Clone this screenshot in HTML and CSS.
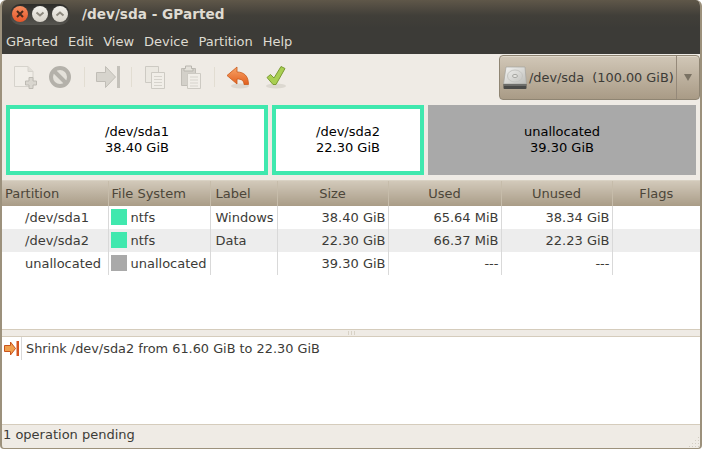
FILE: index.html
```html
<!DOCTYPE html>
<html lang="en">
    <head>
        <title>/dev/sda - GParted</title>
        <meta charset="UTF-8">
        <link rel="stylesheet" href="styles.css">
    </head>
    <body>
        <div class="window">

            <div class="titlebar">
                <div class="wm-buttons">
                    <span class="wm-button wm-close">
                        <svg width="10" height="10" viewBox="0 0 10 10"><path d="M2 2 L8 8 M8 2 L2 8" stroke="#4a2a1c" stroke-width="2"/></svg>
                    </span>
                    <span class="wm-button">
                        <svg width="10" height="10" viewBox="0 0 10 10"><path d="M1.5 3.5 L5 6.5 L8.5 3.5" fill="none" stroke="#8d897f" stroke-width="2"/></svg>
                    </span>
                    <span class="wm-button">
                        <svg width="10" height="10" viewBox="0 0 10 10"><path d="M1.5 6.5 L5 3.5 L8.5 6.5" fill="none" stroke="#8d897f" stroke-width="2"/></svg>
                    </span>
                </div>
                <div class="title">/dev/sda - GParted</div>
            </div>

            <div class="menubar">
                <span>GParted</span>
                <span>Edit</span>
                <span>View</span>
                <span>Device</span>
                <span>Partition</span>
                <span>Help</span>
            </div>

            <div class="toolbar">
                <div class="tools">
                    <svg class="tool tool-new" width="24" height="24" viewBox="0 0 24 24">
                        <path d="M1.5 1.5 H15 L20 6.5 V21.5 H1.5 Z" fill="#f1eee8" stroke="#d6d3cc"/>
                        <path d="M15 1.5 V6.5 H20" fill="#e2dfd8" stroke="#d6d3cc"/>
                        <path d="M16 12.5 H20 V16 H23.5 V20 H20 V23.5 H16 V20 H12.5 V16 H16 Z" fill="#d9d6cf" stroke="#bdbab3"/>
                    </svg>
                    <svg class="tool tool-cancel" width="24" height="24" viewBox="0 0 24 24">
                        <circle cx="12" cy="12" r="9" fill="#e4e1da" stroke="#b4b1aa" stroke-width="4"/>
                        <path d="M6 6 L18 18" stroke="#b4b1aa" stroke-width="4"/>
                    </svg>
                    <span class="sep sep-one"></span>
                    <svg class="tool tool-apply" width="25" height="24" viewBox="0 0 25 24">
                        <path d="M1.5 7.5 H10.5 V1.5 L20.5 12 L10.5 22.5 V16.5 H1.5 Z" fill="#d7d4cd" stroke="#c0bdb6"/>
                        <rect x="22" y="1" width="3" height="22" fill="#c4c1ba"/>
                    </svg>
                    <span class="sep sep-two"></span>
                    <svg class="tool tool-copy" width="22" height="24" viewBox="0 0 22 24">
                        <path d="M1.5 1.5 H14.5 V17.5 H1.5 Z" fill="#ebe8e1" stroke="#cdcac3"/>
                        <path d="M7.5 7.5 H20.5 V23.5 H7.5 Z" fill="#f1eee8" stroke="#cdcac3"/>
                        <path d="M10 11.5 H18 M10 14.5 H18 M10 17.5 H18 M10 20.5 H18" stroke="#d6d3cc"/>
                    </svg>
                    <svg class="tool tool-paste" width="22" height="24" viewBox="0 0 22 24">
                        <path d="M1.5 3.5 H15.5 V20.5 H1.5 Z" fill="#d3d0c9" stroke="#c0bdb6"/>
                        <path d="M5.5 3.5 V1 H11.5 V3.5 H13 V6 H4 V3.5 Z" fill="#e4e1da" stroke="#b9b6af"/>
                        <path d="M7.5 8.5 H20.5 V23.5 H7.5 Z" fill="#f1eee8" stroke="#cdcac3"/>
                        <path d="M10 12 H18 M10 15 H18 M10 18 H18 M10 21 H18" stroke="#d6d3cc"/>
                    </svg>
                    <span class="sep sep-three"></span>
                    <svg class="tool tool-undo" width="24" height="24" viewBox="0 0 24 24">
                        <defs>
                            <linearGradient id="undo-fill" x1="0" y1="0" x2="0" y2="1">
                                <stop offset="0" stop-color="#f8a468"/>
                                <stop offset="1" stop-color="#e2601f"/>
                            </linearGradient>
                        </defs>
                        <ellipse cx="14" cy="21" rx="9" ry="2.5" fill="#dcd8d0"/>
                        <path d="M1 10.5 L11 2 V7 C18 7 22.5 11 22.5 19.5 H18 C18 15.5 15.5 14 11 14 V19 Z" fill="url(#undo-fill)" stroke="#c95a1c" stroke-width=".8"/>
                    </svg>
                    <svg class="tool tool-check" width="22" height="24" viewBox="0 0 22 24">
                        <ellipse cx="11" cy="21" rx="10" ry="2.5" fill="#dcd8d0"/>
                        <path d="M2 12.5 L5.5 9.5 L9 13 L16 1.5 L20 3.5 L11 19.5 H8 Z" fill="#a9cf52" stroke="#7b9b32"/>
                    </svg>
                </div>

                <div class="combo">
                    <div class="combo-main">
                        <svg class="disk" width="24" height="24" viewBox="0 0 24 24">
                            <defs>
                                <linearGradient id="disk-fill" x1="0" y1="0" x2="1" y2="1">
                                    <stop offset="0" stop-color="#f4f4f2"/>
                                    <stop offset="1" stop-color="#bdbdb9"/>
                                </linearGradient>
                            </defs>
                            <path d="M3 1 H22 L23.5 18 H.5 Z" fill="url(#disk-fill)" stroke="#a5a39d" stroke-width=".7"/>
                            <ellipse cx="12" cy="10" rx="7.5" ry="6" fill="none" stroke="#c4c4c0"/>
                            <ellipse cx="12" cy="10" rx="2.5" ry="1.6" fill="#e4e4e0" stroke="#a8a8a4"/>
                            <path d="M.5 18 H23.5 V22 Q23.5 23 22.5 23 H1.5 Q.5 23 .5 22 Z" fill="#4a4a48"/>
                            <path d="M1 18.5 H23 V19.5 H1 Z" fill="#8f8f8b"/>
                        </svg>
                        <span>/dev/sda&nbsp;&nbsp;(100.00 GiB)</span>
                    </div>
                    <div class="combo-arrow"><i></i></div>
                </div>
            </div>

            <div class="diskmap">
                <div class="part part-one">/dev/sda1<br>38.40 GiB</div>
                <div class="part part-two">/dev/sda2<br>22.30 GiB</div>
                <div class="part part-free">unallocated<br>39.30 GiB</div>
            </div>

            <div class="list-area">
                <table class="table">
                    <colgroup>
                        <col class="c-partition">
                        <col class="c-fs">
                        <col class="c-label">
                        <col class="c-size">
                        <col class="c-used">
                        <col class="c-unused">
                        <col>
                    </colgroup>
                    <thead>
                        <tr>
                            <th class="left">Partition</th>
                            <th class="left">File System</th>
                            <th class="left th-label">Label</th>
                            <th>Size</th>
                            <th>Used</th>
                            <th>Unused</th>
                            <th>Flags</th>
                        </tr>
                    </thead>
                    <tbody>
                        <tr>
                            <td class="cell-name">/dev/sda1</td>
                            <td><span class="swatch swatch-ntfs"></span>ntfs</td>
                            <td class="cell-label">Windows</td>
                            <td class="num">38.40 GiB</td>
                            <td class="num">65.64 MiB</td>
                            <td class="num">38.34 GiB</td>
                            <td></td>
                        </tr>
                        <tr class="alt">
                            <td class="cell-name">/dev/sda2</td>
                            <td><span class="swatch swatch-ntfs"></span>ntfs</td>
                            <td class="cell-label">Data</td>
                            <td class="num">22.30 GiB</td>
                            <td class="num">66.37 MiB</td>
                            <td class="num">22.23 GiB</td>
                            <td></td>
                        </tr>
                        <tr>
                            <td class="cell-name">unallocated</td>
                            <td><span class="swatch swatch-free"></span>unallocated</td>
                            <td class="cell-label"></td>
                            <td class="num">39.30 GiB</td>
                            <td class="num">---</td>
                            <td class="num">---</td>
                            <td></td>
                        </tr>
                    </tbody>
                </table>
            </div>

            <div class="pane-handle"><i></i><i></i><i></i></div>

            <div class="log">
                <div class="log-icon">
                    <svg width="15" height="15" viewBox="0 0 15 15">
                        <path d="M.5 4.5 H6.5 V1 L11.5 7.5 L6.5 14 V10.5 H.5 Z" fill="#f0a04e" stroke="#c9541c"/>
                        <rect x="12.5" y="0" width="2.5" height="15" fill="#d4541f"/>
                    </svg>
                </div>
                <div class="log-text">Shrink /dev/sda2 from 61.60 GiB to 22.30 GiB</div>
            </div>

            <div class="statusbar">
                <span>1 operation pending</span>
                <svg class="grip" width="12" height="12" viewBox="0 0 12 12">
                    <path d="M10 1 h1 v1 h-1 Z M7 4 h1 v1 h-1 Z M10 4 h1 v1 h-1 Z M4 7 h1 v1 h-1 Z M7 7 h1 v1 h-1 Z M10 7 h1 v1 h-1 Z M1 10 h1 v1 h-1 Z M4 10 h1 v1 h-1 Z M7 10 h1 v1 h-1 Z M10 10 h1 v1 h-1 Z" fill="#d2cdc2"/>
                </svg>
            </div>

        </div>
    </body>
</html>
```

FILE: styles.css
```css
html, body{
    margin: 0;
    padding: 0;
    background: #fff;
}

body{
    width: 702px;
    height: 449px;
    overflow: hidden;
    font-family: "DejaVu Sans", sans-serif;
    font-size: 13px;
    color: #3c3b37;
}

.window{
    box-sizing: border-box;
    width: 702px;
    height: 449px;
    display: flex;
    flex-direction: column;
    background: #efebe5;
    border-left: 2px solid #9c917c;
    border-right: 2px solid #9c917c;
    border-bottom: 1px solid #9c917c;
    border-radius: 6px 6px 4px 4px;
    overflow: hidden;
}

/* title + menu */
.titlebar{
    margin: 0 -2px;
    height: 28px;
    flex: none;
    display: flex;
    align-items: center;
    background: linear-gradient(to bottom, #5f5749, #413f39 55%, #3c3b37);
}

.wm-buttons{
    display: flex;
    gap: 4px;
    margin-left: 10px;
    padding: 2px 2px;
    height: 17px;
    align-items: center;
    border-radius: 11px;
    background: linear-gradient(to bottom, #2d2c29, #565550);
}

.wm-button{
    width: 16px;
    height: 16px;
    display: flex;
    align-items: center;
    justify-content: center;
    border-radius: 50%;
    background: linear-gradient(to bottom, #f3f1ec, #d6d2c9);
}

.wm-close{
    background: linear-gradient(to bottom, #f58c5e, #e5562a);
}

.title{
    margin-left: 12px;
    font-size: 13.65px;
    font-weight: bold;
    color: #dfdbd2;
}

.menubar{
    margin: 0 -2px;
    height: 26px;
    flex: none;
    padding-left: 6px;
    display: flex;
    gap: 10px;
    align-items: center;
    background: #3c3b37;
    color: #dfdbd2;
}

/* toolbar */
.toolbar{
    height: 50px;
    flex: none;
    display: flex;
    justify-content: space-between;
    align-items: flex-start;
}

.tools{
    display: flex;
    align-items: center;
    height: 24px;
    margin: 11px 0 0 11px;
}

.tool{
    display: block;
    flex: none;
}

.tool-cancel{ margin-left: 11px; }
.tool-paste{ margin-left: 14px; }
.tool-check{ margin-left: 15px; }

.sep{
    width: 1px;
    height: 20px;
    background: #e2ddd2;
}

.sep-one{ margin: 0 10px 0 12px; }
.sep-two{ margin: 0 12px 0 11px; }
.sep-three{ margin: 0 11px 0 12px; }

.combo{
    box-sizing: border-box;
    width: 201px;
    height: 45px;
    margin: 1px 0 0 0;
    display: flex;
    font-size: 12.87px;
    border: 1px solid #8f8573;
    border-radius: 4px;
    background: linear-gradient(to bottom, #d1c7b7, #a99b86);
    box-shadow: inset 0 1px 0 #e0d8cb;
}

.combo-main{
    flex: 1;
    display: flex;
    align-items: center;
    padding-left: 3px;
    gap: 2px;
    white-space: nowrap;
    border-right: 1px solid #95897a;
}

.disk{
    flex: none;
}

.combo-arrow{
    width: 22px;
    display: flex;
    align-items: center;
    justify-content: center;
}

.combo-arrow i{
    width: 0;
    height: 0;
    border-left: 4px solid transparent;
    border-right: 4px solid transparent;
    border-top: 7px solid #7a7263;
}

/* disk graph */
.diskmap{
    height: 71px;
    flex: none;
    display: flex;
    gap: 4px;
    padding: 1px 4px 0 4px;
    box-sizing: border-box;
}

.part{
    box-sizing: border-box;
    height: 70px;
    display: flex;
    flex-direction: column;
    align-items: center;
    justify-content: center;
    text-align: center;
    line-height: 16px;
    color: #000;
    background: #fff;
    border: 4px solid #40e8ae;
}

.part-one{ width: 262px; }
.part-two{ width: 152px; }
.part-free{
    width: 268px;
    background: #a9a9a9;
    border: 0;
}

/* table */
.list-area{
    margin-top: 5px;
    height: 149px;
    flex: none;
    box-sizing: border-box;
    background: #fff;
    border-top: 1px solid #d9d2c4;
    overflow: hidden;
}

.table{
    width: 698px;
    table-layout: fixed;
    border-collapse: collapse;
}

.c-partition{ width: 106px; }
.c-fs{ width: 102px; }
.c-label{ width: 67px; }
.c-size{ width: 111px; }
.c-used{ width: 113px; }
.c-unused{ width: 111px; }

th{
    box-sizing: border-box;
    height: 25px;
    padding: 0;
    font-weight: normal;
    text-align: center;
    color: #4c4639;
    background: linear-gradient(to bottom, #d2c9ba, #a99c87);
    border-right: 1px solid #c6bcaa;
}

th.left{
    text-align: left;
    padding-left: 3px;
}

th.th-label{
    padding-left: 5px;
}

td{
    box-sizing: border-box;
    height: 23px;
    padding: 0 3px 1px;
    white-space: nowrap;
    color: #3c3b37;
    border-right: 1px solid #d9d9d9;
}

td:last-child, th:last-child{
    border-right: 0;
}

.cell-name{
    padding-left: 23px;
}

.cell-label{
    padding-left: 5px;
}

.alt td{
    background: #ededed;
}

.num{
    text-align: right;
    padding-right: 2px;
}

.swatch{
    display: inline-block;
    width: 16px;
    height: 16px;
    margin: 0 4px 0 -1px;
    vertical-align: -3px;
}

.swatch-ntfs{ background: #40e8ae; }
.swatch-free{ background: #a9a9a9; }

/* pane between table and log */
.pane-handle{
    height: 8px;
    flex: none;
    box-sizing: border-box;
    display: flex;
    justify-content: center;
    align-items: center;
    gap: 2px;
    border-top: 1px solid #d5ccbc;
    border-bottom: 1px solid #d5ccbc;
}

.pane-handle i{
    width: 1px;
    height: 4px;
    background: #d8d2c6;
}

.log{
    height: 88px;
    flex: none;
    display: flex;
    align-items: flex-start;
    background: #fff;
    border-bottom: 1px solid #d5ccbc;
    box-sizing: border-box;
}

.log-icon{
    box-sizing: border-box;
    width: 20px;
    height: 23px;
    padding: 4px 0 0 2px;
    border-right: 1px solid #d9d9d9;
}

.log-icon svg{
    display: block;
}

.log-text{
    padding: 3px 0 0 4px;
    font-size: 12.87px;
    line-height: 17px;
}

.statusbar{
    flex: 1;
    display: flex;
    align-items: center;
    justify-content: space-between;
    padding: 0 0 5px 1px;
    position: relative;
}

.grip{
    position: absolute;
    right: 0;
    bottom: 0;
}
```
